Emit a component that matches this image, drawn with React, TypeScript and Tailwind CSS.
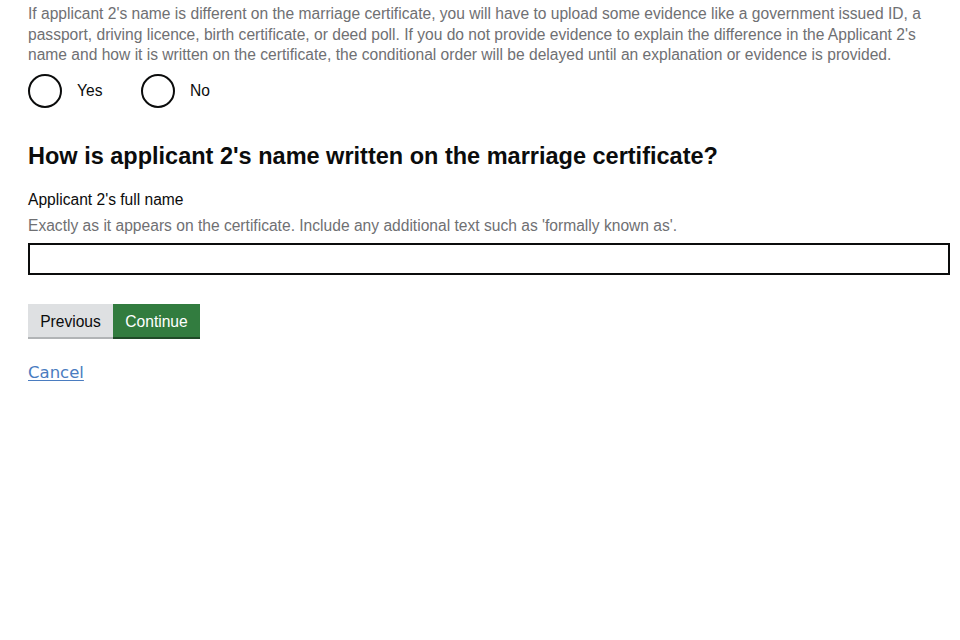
import React from 'react'

export default function App() {
  return (
    <div className="min-h-[640px] w-[960px] bg-white px-[28px] pt-[4px] font-['Liberation_Sans',Arial,sans-serif] text-[#0b0c0c]">
      {/* Hint text above radios */}
      <p className="text-[15.6px] leading-[20.5px] text-[#6f7073] pr-[10px]">
        If applicant 2's name is different on the marriage certificate, you will have to upload some evidence like a government issued ID, a passport, driving licence, birth certificate, or deed poll. If you do not provide evidence to explain the difference in the Applicant 2's name and how it is written on the certificate, the conditional order will be delayed until an explanation or evidence is provided.
      </p>

      <div className="mt-[8px] flex items-center">
        <label className="flex items-center gap-[15px] text-[15.6px]">
          <span className="h-[34px] w-[34px] rounded-full border-2 border-[#0b0c0c]" />
          <span className="w-[64px]">Yes</span>
        </label>
        <label className="flex items-center gap-[15px] text-[15.6px]">
          <span className="h-[34px] w-[34px] rounded-full border-2 border-[#0b0c0c]" />
          <span>No</span>
        </label>
      </div>

      <h2 className="mt-[34px] text-[23.5px] font-bold leading-[28px]">
        How is applicant 2's name written on the marriage certificate?
      </h2>

      <div className="mt-[20px]">
        <div className="text-[15.6px] leading-[20px]">Applicant 2's full name</div>
        <div className="mt-[6px] text-[15.6px] leading-[20px] text-[#6f7073]">
          Exactly as it appears on the certificate. Include any additional text such as 'formally known as'.
        </div>
        <input type="text" className="mt-[7px] block h-[32px] w-[922px] border-2 border-[#0b0c0c] bg-white outline-none" />
      </div>

      <div className="mt-[29px] flex">
        <button className="h-[35px] w-[85px] border-b-2 border-[#b1b4b6] bg-[#dee0e2] pt-[3px] text-[15.6px] text-[#0b0c0c]">
          Previous
        </button>
        <button className="h-[35px] w-[87px] border-b-2 border-[#1f4a27] bg-[#327c3f] pt-[3px] text-[15.6px] text-white">
          Continue
        </button>
      </div>

      <a href="#" className="mt-[22px] inline-block font-['DejaVu_Sans',sans-serif] text-[16.5px] text-[#4a7cc0] underline underline-offset-2">
        Cancel
      </a>
    </div>
  )
}
